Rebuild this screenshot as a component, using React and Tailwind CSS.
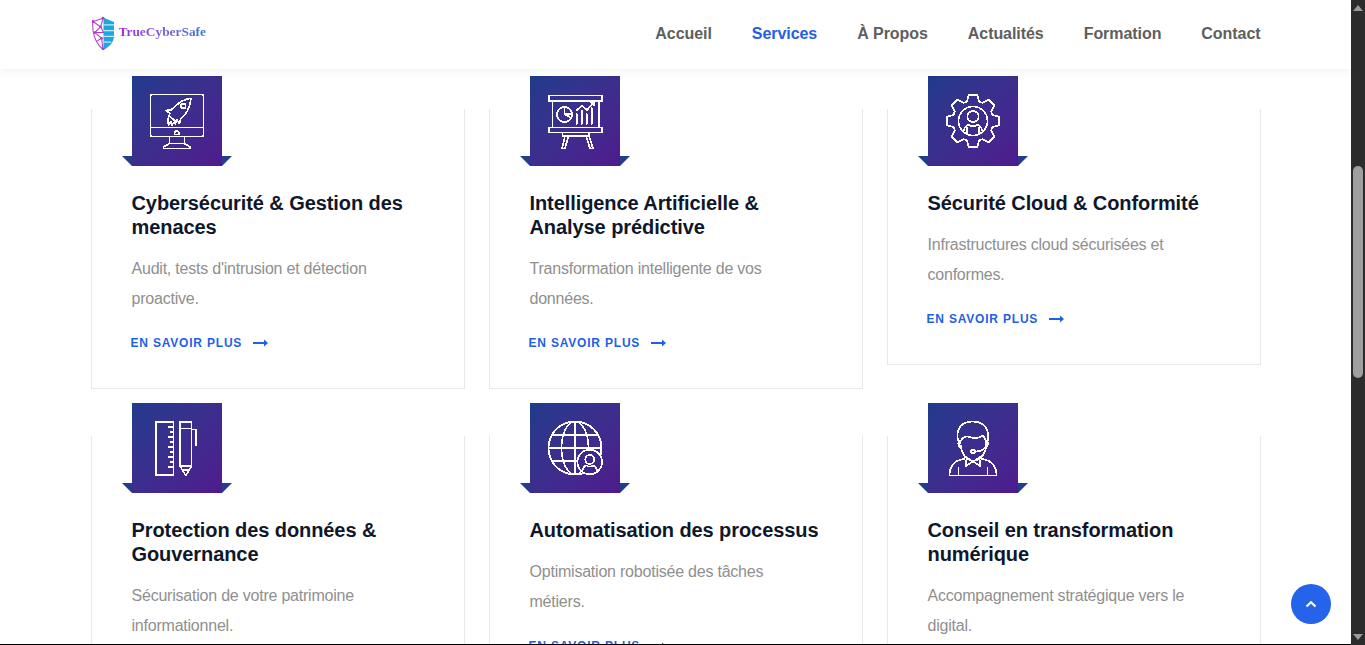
import React from "react";

const gearPath = () => {
  const pts = [];
  for (let i = 0; i < 8; i++) {
    const a = (i * Math.PI) / 4 - Math.PI / 2;
    const at = (r, d) => `${(45 + r * Math.cos(a + d)).toFixed(2)} ${(45 + r * Math.sin(a + d)).toFixed(2)}`;
    pts.push(at(20.5, -0.3), at(26.5, -0.16), at(26.5, 0.16), at(20.5, 0.3));
  }
  return "M" + pts.join("L") + "Z";
};

const Svg = ({ children }) => (
  <svg viewBox="0 0 90 90" className="w-[90px] h-[90px]" fill="none" stroke="white" strokeWidth="1.7" strokeLinejoin="round" strokeLinecap="round" shapeRendering="crispEdges">
    {children}
  </svg>
);

const RocketIcon = () => (
  <Svg>
    <rect x="18.5" y="18.5" width="53" height="42" rx="1.5" />
    <path d="M18.5 51.5H71.5M37.5 60.5V67.5M52.5 60.5V67.5M37.5 67.5H52.5L58 71V72.5H31.5V71L37.5 67.5Z" />
    <path d="M42.5 56.5L44.7 54.5L47 56.5V58.5H42.5Z" />
    <path d="M59 22.3C53 23 47.5 26 43.5 30L39 34L34 34.5L38 37.5L37 39.5L43 45L45 44L47.5 47.5L48.5 43C54 39 58.5 31 59 22.3Z" />
    <circle cx="51.3" cy="30" r="2.4" />
    <path d="M37 40C35.5 42.5 36 46 36.5 49L39 46L40 49L42 46.5L43.5 48C44 46.5 44 45.5 43.5 45" />
  </Svg>
);

const BoardIcon = () => (
  <Svg>
    <rect x="19" y="19.5" width="53" height="5.5" />
    <rect x="19" y="51.5" width="53" height="5" />
    <path d="M22.5 25V51.5M69 25V51.5M32.5 56.5V60H59V56.5" />
    <path d="M35 60L32 72.5H35L38.5 60M56 60L60 72.5H63L59 60" />
    <circle cx="34.5" cy="38.5" r="7.6" />
    <path d="M34.5 31V38L41 42M35 38H42" />
    <path d="M46.5 34.5L52 29.5L57 34L63.5 26.5M60.5 26H64V29.5" />
    <path d="M46.7 38V48M51.7 34.5V48M56.7 38V48M61.7 32V48" />
  </Svg>
);

const GearIcon = () => (
  <Svg>
    <path d={gearPath()} />
    <circle cx="45" cy="45" r="14.5" />
    <circle cx="45" cy="40.5" r="5.6" />
    <path d="M36 54C37 50.5 39 49 41 48.5C43 51 47 51 49 48.5C51 49 53 50.5 54 54M39 52V58.5M51 52V58.5" />
  </Svg>
);

const RulerIcon = () => (
  <Svg>
    <rect x="24" y="19" width="17.5" height="53" />
    <path d="M41.5 24H37M41.5 29H38.5M41.5 34H37M41.5 39H38.5M41.5 44H37M41.5 49H38.5M41.5 54H37M41.5 59H38.5M41.5 64H37" />
    <path d="M48 19H59.5V63L53.7 72.5L48 63Z" />
    <path d="M48 25.5H59.5M59.5 26.5H64V42M48 63H59.5M51.5 67L56 67" />
  </Svg>
);

const GlobeIcon = () => (
  <Svg>
    <circle cx="45" cy="45" r="26.5" />
    <ellipse cx="45" cy="45" rx="13.5" ry="26.5" />
    <path d="M45 18.5V71.5M18.5 45H71.5M22.5 32H67.5M22.5 58H50" />
    <circle cx="59.7" cy="59" r="12.3" fill="#3e2a8d" />
    <circle cx="59.7" cy="56.5" r="4.5" />
    <path d="M52.5 69C52.5 64.5 54.5 63 56.5 62.5C58 64 61.5 64 63 62.5C65 63 67 64.5 67 69" />
  </Svg>
);

const AgentIcon = () => (
  <Svg>
    <path d="M31.5 41C27.5 33 28 19 44.5 18.5C61 18.5 62 33 58.5 41" />
    <path d="M31.5 41C33 36 36 33 40 33.5C46 36 52 35 55 32.5C57 35 58 38 58 42C58 50 53 57 45 58C38.5 57 33 50 33 43" />
    <path d="M32 37.5C29.5 38.5 29.5 43 32.5 44.5M58.5 37.5C60.5 39 60.5 43 57.5 44.5" />
    <circle cx="45" cy="48.5" r="2" />
    <path d="M47 48.5C52 48.5 55 47.5 57 44.5" />
    <path d="M38 53.5L36 56C29 57 21.5 60 21.5 72.5H68.5C68.5 60 61 57 54 56L52 53.5" />
    <path d="M38.5 54.5L45 58.5L38 63L38.5 54.5ZM51.5 54.5L45 58.5L52 63L51.5 54.5Z" />
    <path d="M30.5 65V72.5M59.5 65V72.5" />
  </Svg>
);

const services = [
  { icon: RocketIcon, title: ["Cybersécurité & Gestion des", "menaces"], text: ["Audit, tests d'intrusion et détection", "proactive."] },
  { icon: BoardIcon, title: ["Intelligence Artificielle &", "Analyse prédictive"], text: ["Transformation intelligente de vos", "données."] },
  { icon: GearIcon, title: ["Sécurité Cloud & Conformité"], text: ["Infrastructures cloud sécurisées et", "conformes."] },
  { icon: RulerIcon, title: ["Protection des données &", "Gouvernance"], text: ["Sécurisation de votre patrimoine", "informationnel."] },
  { icon: GlobeIcon, title: ["Automatisation des processus"], text: ["Optimisation robotisée des tâches", "métiers."] },
  { icon: AgentIcon, title: ["Conseil en transformation", "numérique"], text: ["Accompagnement stratégique vers le", "digital."] },
];

const ServiceCard = ({ item }) => {
  const Icon = item.icon;
  return (
    <div className="border-x border-b border-[#e8e8ee] mt-[33px] pl-10 pr-6 pb-[37px]">
      <div className="relative w-[90px] h-[90px] -mt-[33px] bg-gradient-to-br from-[#1f3b8c] to-[#4f1a8e]">
        <span className="absolute left-[-10px] bottom-0 w-0 h-0 border-t-[10px] border-l-[10px] border-t-[#233c8d] border-l-transparent" />
        <span className="absolute right-[-10px] bottom-0 w-0 h-0 border-t-[10px] border-r-[10px] border-t-[#233c8d] border-r-transparent" />
        <Icon />
      </div>
      <h3 className="mt-[25px] text-[20px] leading-[24px] font-bold tracking-[-0.08px] text-[#0f172a]">
        {item.title.map((t) => (
          <div key={t}>{t}</div>
        ))}
      </h3>
      <p className="mt-[15px] text-[16px] leading-[30px] tracking-[-0.22px] text-[#8f8f8f]">
        {item.text.map((t) => (
          <span key={t} className="block">{t}</span>
        ))}
      </p>
      <a className="mt-[21px] -ml-px flex items-center gap-[11px] text-[12px] leading-[16px] font-bold tracking-[0.8px] text-[#1f5fe8] uppercase">
        En savoir plus
        <svg width="15" height="8" viewBox="0 0 15 8" fill="#1f5fe8">
          <path d="M0 3H11V0.5L15 4L11 7.5V5H0Z" />
        </svg>
      </a>
    </div>
  );
};

const Logo = () => (
  <div className="flex items-center gap-[4px] ml-px">
    <svg width="23" height="35" viewBox="0 0 24 36" fill="none">
      <path d="M12 1.5L23 6V20C23 27 18 32 12 35Z" fill="#1fa6dc" />
      <path d="M12 9H23M12 15H23M12 21H23M12 27H20" stroke="#bfeaf8" strokeWidth="1.2" />
      <path d="M11.5 2L1 5.5C0 14 2 27 11.5 34.5M1 5.5L9 11L3 17L10 23L5 26M11.5 2L9 11L12 17L3 17M10 23L11.5 34.5" stroke="#b43bcf" strokeWidth="1.1" />
      <circle cx="11.5" cy="2" r="1.5" fill="#b43bcf" />
      <circle cx="1" cy="5.5" r="1.5" fill="#b43bcf" />
      <circle cx="9" cy="11" r="1.4" fill="#b43bcf" />
      <circle cx="3" cy="17" r="1.4" fill="#b43bcf" />
      <circle cx="10" cy="23" r="1.4" fill="#b43bcf" />
      <circle cx="11.5" cy="34" r="1.5" fill="#b43bcf" />
    </svg>
    <span className="-mt-[4px] font-['Liberation_Serif',serif] font-bold text-[13.4px] leading-[18px] bg-gradient-to-r from-[#a82bd8] to-[#2479d6] bg-clip-text text-transparent">
      TrueCyberSafe
    </span>
  </div>
);

const navItems = ["Accueil", "Services", "À Propos", "Actualités", "Formation", "Contact"];

export default function App() {
  return (
    <div className="relative flex h-[645px] overflow-hidden bg-white font-['Liberation_Sans',Arial,sans-serif]">
      <div className="flex-1 flex flex-col min-w-0">
        <header className="relative z-10 h-[69px] shrink-0 pb-[2px] bg-white shadow-[0_2px_10px_rgba(0,0,0,0.06)]">
          <div className="w-[1170px] mx-auto h-full flex items-center justify-between">
            <Logo />
            <nav className="flex gap-10 text-[16px] font-bold tracking-[-0.06px] text-[#5e5e5e]">
              {navItems.map((n) => (
                <a key={n} className={n === "Services" ? "text-[#1f5fe8]" : ""}>{n}</a>
              ))}
            </nav>
          </div>
        </header>
        <main className="flex-1 overflow-hidden pt-[7px]">
          <div className="w-[1170px] mx-auto grid grid-cols-3 gap-x-6 gap-y-[14px] items-start">
            {services.map((s) => (
              <ServiceCard key={s.title[0]} item={s} />
            ))}
          </div>
        </main>
        <div className="h-px shrink-0 bg-black" />
      </div>
      <div className="w-[14px] shrink-0 bg-[#2c2c2c] flex flex-col items-center relative">
        <span className="mt-[5px] w-0 h-0 border-x-[5px] border-x-transparent border-b-[6px] border-b-[#9a9a9a]" />
        <div className="mt-[155px] w-[10px] h-[212px] rounded-full bg-[#9f9f9f]" />
        <span className="mt-auto mb-[5px] w-0 h-0 border-x-[5px] border-x-transparent border-t-[6px] border-t-[#9a9a9a]" />
      </div>
      <button className="absolute left-[1291px] top-[584px] w-10 h-10 rounded-full bg-[#2563eb] flex items-center justify-center">
        <svg width="12" height="8" viewBox="0 0 12 8" fill="none" stroke="white" strokeWidth="2.2">
          <path d="M1.5 6.5L6 2.2L10.5 6.5" />
        </svg>
      </button>
    </div>
  );
}
